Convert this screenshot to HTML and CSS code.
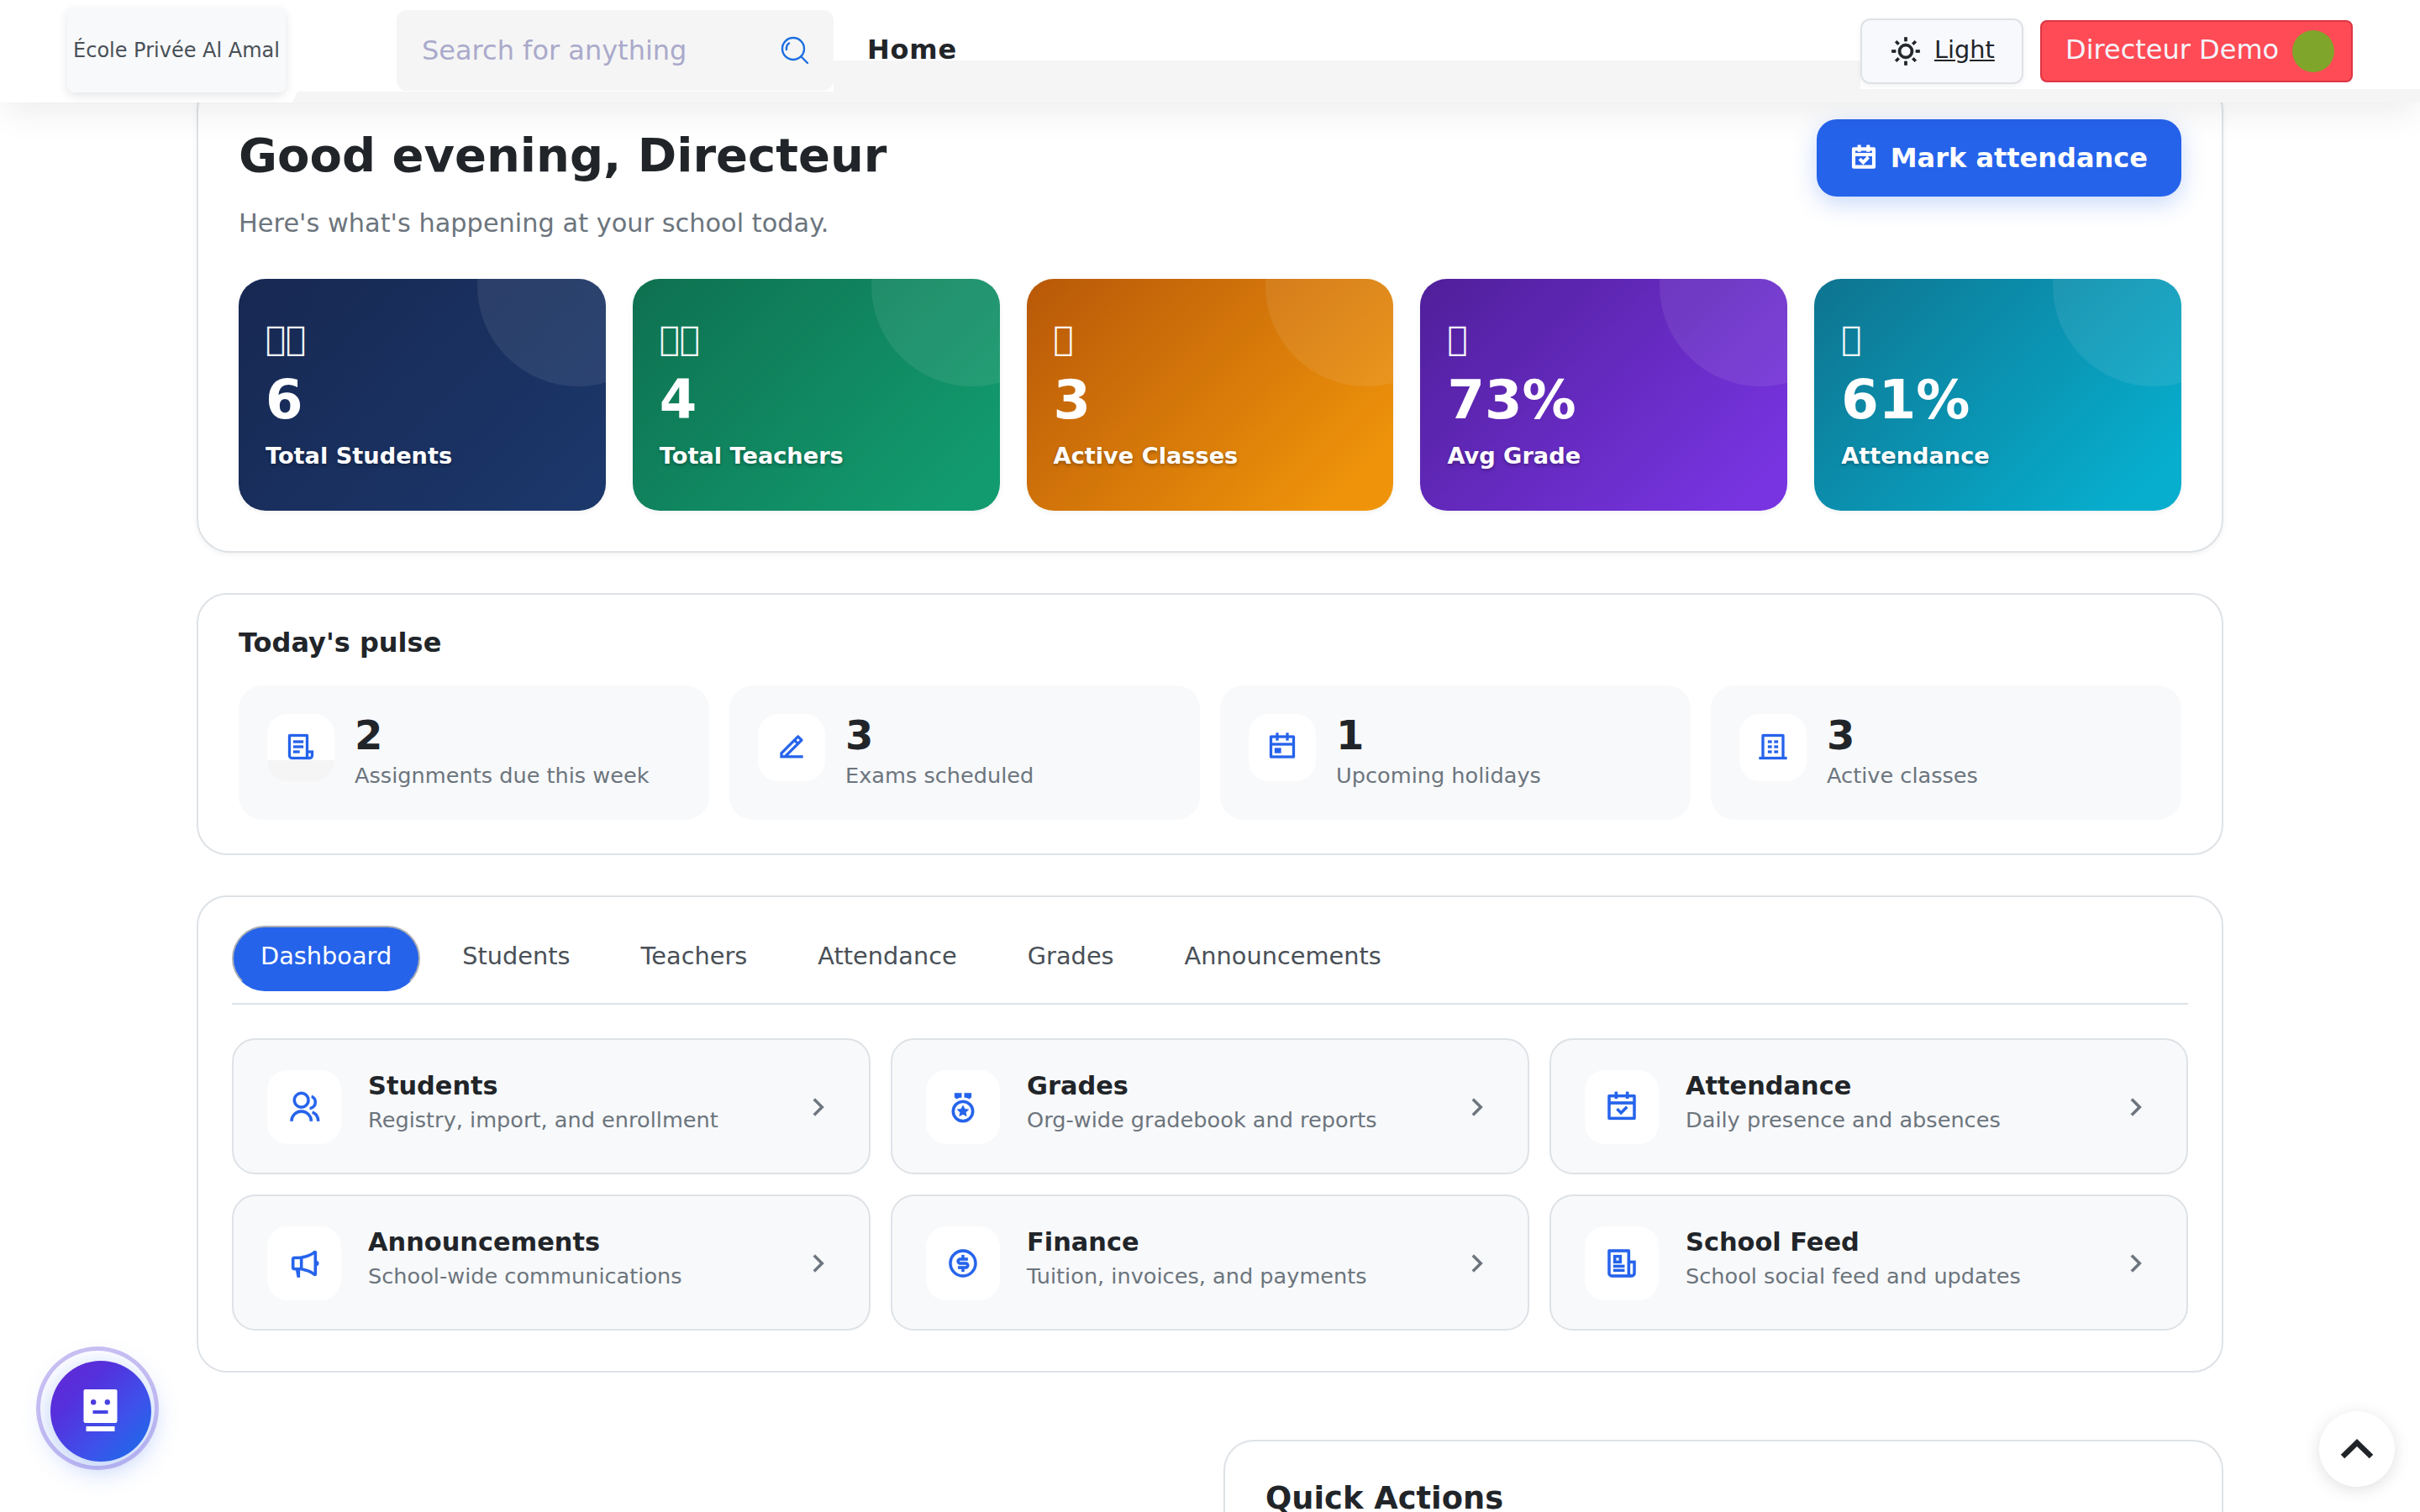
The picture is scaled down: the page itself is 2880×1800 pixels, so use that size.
FILE: index.html
```html
<!DOCTYPE html>
<html lang="en">
<head>
    <meta charset="UTF-8">
    <meta name="viewport" content="width=device-width, initial-scale=1.0">
    <title>École Privée Al Amal - Home</title>
    <link rel="stylesheet" href="styles.css">
</head>
<body>

    <header class="topbar">
        <div class="band band-left"></div>
        <div class="band band-mid"></div>
        <div class="band band-right"></div>
        <a class="logo">École Privée Al Amal</a>
        <div class="search">
            <span>Search for anything</span>
            <svg viewBox="0 0 36 36" fill="none" stroke="currentColor" stroke-width="2.4" stroke-linecap="round"><circle cx="16" cy="16" r="13"/><path d="M25.500 25.500L33 33M8 17a8 8 0 0 1 3-7.500"/></svg>
        </div>
        <a class="nav-home">Home</a>
        <div class="topbar-right">
            <a class="theme-btn">
                <svg class="ri" viewBox="0 0 24 24"><path d="M12 18a6 6 0 1 1 0-12 6 6 0 0 1 0 12zm0-2a4 4 0 1 0 0-8 4 4 0 0 0 0 8zM11 1h2v3h-2V1zm0 19h2v3h-2v-3zM3.515 4.929l1.414-1.414L7.050 5.636 5.636 7.050 3.515 4.930zM16.950 18.364l1.414-1.414 2.121 2.121-1.414 1.414-2.121-2.121zm2.121-14.850l1.414 1.415-2.121 2.121-1.414-1.414 2.121-2.121zM5.636 16.950l1.414 1.414-2.121 2.121-1.414-1.414 2.121-2.121zM23 11v2h-3v-2h3zM4 11v2H1v-2h3z"/></svg>
                <span>Light</span>
            </a>
            <a class="user-btn"><span>Directeur Demo</span> <span class="avatar"></span></a>
        </div>
    </header>

    <main>
        <section class="card hero">
            <div class="hero-head">
                <div>
                    <h1>Good evening, Directeur</h1>
                    <p>Here's what's happening at your school today.</p>
                </div>
                <a class="btn-primary">
                    <svg class="ri" viewBox="0 0 24 24"><path d="M9 1v2h6V1h2v2h4a1 1 0 0 1 1 1v16a1 1 0 0 1-1 1H3a1 1 0 0 1-1-1V4a1 1 0 0 1 1-1h4V1h2zm11 9H4v9h16v-9zm-4.964 1.136l1.414 1.414-4.950 4.950-3.536-3.536L9.380 12.550l2.121 2.122 3.536-3.536zM7 5H4v3h16V5h-3v1h-2V5H9v1H7V5z"/></svg>
                    Mark attendance
                </a>
            </div>
            <div class="stats">
                <div class="stat stat-navy">
                    <div class="stat-icon">&#xF0001;&#xF0002;</div>
                    <div class="stat-value">6</div>
                    <div class="stat-label">Total Students</div>
                </div>
                <div class="stat stat-green">
                    <div class="stat-icon">&#xF0001;&#xF0003;</div>
                    <div class="stat-value">4</div>
                    <div class="stat-label">Total Teachers</div>
                </div>
                <div class="stat stat-orange">
                    <div class="stat-icon">&#xF0003;</div>
                    <div class="stat-value">3</div>
                    <div class="stat-label">Active Classes</div>
                </div>
                <div class="stat stat-purple">
                    <div class="stat-icon">&#xF0004;</div>
                    <div class="stat-value">73%</div>
                    <div class="stat-label">Avg Grade</div>
                </div>
                <div class="stat stat-cyan">
                    <div class="stat-icon">&#xF0005;</div>
                    <div class="stat-value">61%</div>
                    <div class="stat-label">Attendance</div>
                </div>
            </div>
        </section>

        <section class="card pulse">
            <h2>Today's pulse</h2>
            <div class="pulse-grid">
                <div class="pulse-item">
                    <div class="pulse-icon pulse-icon-split"><svg class="ri" viewBox="0 0 24 24"><path d="M19 22H5a3 3 0 0 1-3-3V3a1 1 0 0 1 1-1h14a1 1 0 0 1 1 1v12h4v4a3 3 0 0 1-3 3zm-1-5v2a1 1 0 0 0 2 0v-2h-2zm-2 3V4H4v15a1 1 0 0 0 1 1h11zM6 7h8v2H6V7zm0 4h8v2H6v-2zm0 4h5v2H6v-2z"/></svg></div>
                    <div><strong>2</strong><span>Assignments due this week</span></div>
                </div>
                <div class="pulse-item">
                    <div class="pulse-icon"><svg class="ri" viewBox="0 0 24 24"><path d="M5 18.890h1.414l9.314-9.314-1.414-1.414L5 17.476v1.414zm16 2H3v-4.243L16.435 3.212a1 1 0 0 1 1.414 0l2.829 2.829a1 1 0 0 1 0 1.414L9.243 18.890H21v2zM15.728 6.748l1.414 1.414 1.414-1.414-1.414-1.414-1.414 1.414z"/></svg></div>
                    <div><strong>3</strong><span>Exams scheduled</span></div>
                </div>
                <div class="pulse-item">
                    <div class="pulse-icon"><svg class="ri" viewBox="0 0 24 24"><path d="M9 1v2h6V1h2v2h4a1 1 0 0 1 1 1v16a1 1 0 0 1-1 1H3a1 1 0 0 1-1-1V4a1 1 0 0 1 1-1h4V1h2zm11 10H4v8h16v-8zm-9 2v4H6v-4h5zM7 5H4v4h16V5h-3v2h-2V5H9v2H7V5z"/></svg></div>
                    <div><strong>1</strong><span>Upcoming holidays</span></div>
                </div>
                <div class="pulse-item">
                    <div class="pulse-icon"><svg class="ri" viewBox="0 0 24 24"><path d="M21 20h2v2H1v-2h2V3a1 1 0 0 1 1-1h16a1 1 0 0 1 1 1v17zm-2 0V4H5v16h14zM8 11h3v2H8v-2zm0-4h3v2H8V7zm0 8h3v2H8v-2zm5 0h3v2h-3v-2zm0-4h3v2h-3v-2zm0-4h3v2h-3V7z"/></svg></div>
                    <div><strong>3</strong><span>Active classes</span></div>
                </div>
            </div>
        </section>

        <section class="card hub">
            <nav class="tabs">
                <a class="tab active">Dashboard</a>
                <a class="tab">Students</a>
                <a class="tab">Teachers</a>
                <a class="tab">Attendance</a>
                <a class="tab">Grades</a>
                <a class="tab">Announcements</a>
            </nav>
            <div class="tiles">
                <a class="tile">
                    <div class="tile-icon"><svg class="ri" viewBox="0 0 24 24"><path d="M2 22a8 8 0 1 1 16 0h-2a6 6 0 1 0-12 0H2zm8-9c-3.315 0-6-2.685-6-6s2.685-6 6-6 6 2.685 6 6-2.685 6-6 6zm0-2c2.210 0 4-1.790 4-4s-1.790-4-4-4-4 1.790-4 4 1.790 4 4 4zm8.284 3.703A8.002 8.002 0 0 1 23 22h-2a6.001 6.001 0 0 0-3.537-5.473l.82-1.824zm-.688-11.290A5.500 5.500 0 0 1 21 8.500a5.499 5.499 0 0 1-5 5.478v-2.013a3.500 3.500 0 0 0 1.041-6.609l.555-1.943z"/></svg></div>
                    <div class="tile-text"><strong>Students</strong><span>Registry, import, and enrollment</span></div>
                    <svg class="ri arrow" viewBox="0 0 24 24"><path d="M13.172 12l-4.950-4.950 1.414-1.414L16 12l-6.364 6.364-1.414-1.414z"/></svg>
                </a>
                <a class="tile">
                    <div class="tile-icon"><svg class="ri" viewBox="0 0 24 24"><path d="M12 7a8 8 0 1 1 0 16 8 8 0 0 1 0-16zm0 2a6 6 0 1 0 0 12 6 6 0 0 0 0-12zm0 1.500l1.323 2.680 2.957.43-2.140 2.085.505 2.946L12 17.250l-2.645 1.390.505-2.945-2.140-2.086 2.957-.43L12 10.500zm1-8.501L18 2v3l-1.363 1.138A9.935 9.935 0 0 0 13 5.049L13 2zm-2 0v3.050a9.935 9.935 0 0 0-3.636 1.088L6 5V2l5-.001z"/></svg></div>
                    <div class="tile-text"><strong>Grades</strong><span>Org-wide gradebook and reports</span></div>
                    <svg class="ri arrow" viewBox="0 0 24 24"><path d="M13.172 12l-4.950-4.950 1.414-1.414L16 12l-6.364 6.364-1.414-1.414z"/></svg>
                </a>
                <a class="tile">
                    <div class="tile-icon"><svg class="ri" viewBox="0 0 24 24"><path d="M9 1v2h6V1h2v2h4a1 1 0 0 1 1 1v16a1 1 0 0 1-1 1H3a1 1 0 0 1-1-1V4a1 1 0 0 1 1-1h4V1h2zm11 9H4v9h16v-9zm-4.964 1.136l1.414 1.414-4.950 4.950-3.536-3.536L9.380 12.550l2.121 2.122 3.536-3.536zM7 5H4v3h16V5h-3v1h-2V5H9v1H7V5z"/></svg></div>
                    <div class="tile-text"><strong>Attendance</strong><span>Daily presence and absences</span></div>
                    <svg class="ri arrow" viewBox="0 0 24 24"><path d="M13.172 12l-4.950-4.950 1.414-1.414L16 12l-6.364 6.364-1.414-1.414z"/></svg>
                </a>
                <a class="tile">
                    <div class="tile-icon"><svg class="ri" viewBox="0 0 24 24"><path d="M9 17s7 1 10 4h1a1 1 0 0 0 1-1v-6.063a2 2 0 0 0 0-3.874V4a1 1 0 0 0-1-1h-1C16 6 9 7 9 7H5a2 2 0 0 0-2 2v6a2 2 0 0 0 2 2h1l1 5h2v-5zm2-8.339c.683-.146 1.527-.35 2.440-.617 1.678-.494 3.810-1.271 5.560-2.470v12.851c-1.750-1.198-3.883-1.975-5.560-2.469A33.400 33.400 0 0 0 11 15.339V8.661zM5 9h4v6H5V9z"/></svg></div>
                    <div class="tile-text"><strong>Announcements</strong><span>School-wide communications</span></div>
                    <svg class="ri arrow" viewBox="0 0 24 24"><path d="M13.172 12l-4.950-4.950 1.414-1.414L16 12l-6.364 6.364-1.414-1.414z"/></svg>
                </a>
                <a class="tile">
                    <div class="tile-icon"><svg class="ri" viewBox="0 0 24 24"><path d="M12 22C6.477 22 2 17.523 2 12S6.477 2 12 2s10 4.477 10 10-4.477 10-10 10zm0-2a8 8 0 1 0 0-16 8 8 0 0 0 0 16zm-3.500-6H14a.5.5 0 1 0 0-1h-4a2.500 2.500 0 1 1 0-5h1V6h2v2h2.500v2H10a.5.5 0 1 0 0 1h4a2.500 2.500 0 1 1 0 5h-1v2h-2v-2H8.500v-2z"/></svg></div>
                    <div class="tile-text"><strong>Finance</strong><span>Tuition, invoices, and payments</span></div>
                    <svg class="ri arrow" viewBox="0 0 24 24"><path d="M13.172 12l-4.950-4.950 1.414-1.414L16 12l-6.364 6.364-1.414-1.414z"/></svg>
                </a>
                <a class="tile">
                    <div class="tile-icon"><svg class="ri" viewBox="0 0 24 24"><path d="M16 20V4H4v15a1 1 0 0 0 1 1h11zm3 2H5a3 3 0 0 1-3-3V3a1 1 0 0 1 1-1h14a1 1 0 0 1 1 1v7h4v9a3 3 0 0 1-3 3zm-1-10v7a1 1 0 0 0 2 0v-7h-2zM6 6h6v6H6V6zm2 2v2h2V8H8zm-2 5h8v2H6v-2zm0 3h8v2H6v-2z"/></svg></div>
                    <div class="tile-text"><strong>School Feed</strong><span>School social feed and updates</span></div>
                    <svg class="ri arrow" viewBox="0 0 24 24"><path d="M13.172 12l-4.950-4.950 1.414-1.414L16 12l-6.364 6.364-1.414-1.414z"/></svg>
                </a>
            </div>
        </section>

        <section class="card quick">
            <h2>Quick Actions</h2>
        </section>
    </main>

    <a class="assistant">
        <svg viewBox="0 0 42 52"><path fill="#fff" fill-rule="evenodd" d="M2.500 0h36a2 2 0 0 1 2 2v36a2 2 0 0 1-2 2h-36a2 2 0 0 1-2-2V2a2 2 0 0 1 2-2zM12.200 12a3.200 3.200 0 1 0 0 6.400 3.200 3.200 0 0 0 0-6.400zM28.800 12a3.200 3.200 0 1 0 0 6.400 3.200 3.200 0 0 0 0-6.400zM11.500 25v4h18v-4zM3.500 44h34v6h-34z"/></svg>
    </a>
    <a class="to-top">
        <svg viewBox="0 0 40 26" fill="none" stroke="#212529" stroke-width="6.500"><path d="M3 22L20 5.500l17 16.500"/></svg>
    </a>

</body>
</html>
```
FILE: styles.css
```css
*, *::before, *::after {
    box-sizing: border-box;
}
body, html {
    margin: 0;
    padding: 0;
    height: 1800px;
    overflow: hidden;
}
body {
    font-family: "DejaVu Sans", sans-serif;
    background-color: #ffffff;
    color: #212529;
}
h1, h2, p {
    margin: 0;
}
.ri {
    fill: currentColor;
    display: block;
    flex: none;
}

/* top bar */
.topbar {
    position: relative;
    z-index: 10;
    display: flex;
    align-items: flex-start;
    height: 122px;
    padding: 0 80px;
    background: #ffffff;
    box-shadow: 0 16px 40px -4px rgba(0, 0, 0, 0.075);
}
.band {
    position: absolute;
    bottom: 0;
    background: #f5f5f5;
}
.band-left {
    left: 348px;
    width: 644px;
    height: 13px;
    clip-path: polygon(6px 0, 100% 0, 100% 100%, 0 100%);
}
.band-mid {
    left: 992px;
    width: 1222px;
    height: 50px;
}
.band-right {
    left: 2214px;
    right: 0;
    height: 16px;
}
.logo {
    position: relative;
    width: 260px;
    height: 101px;
    margin-top: 9px;
    border-radius: 8px;
    background: #f8f9fb;
    box-shadow: 0 4px 12px rgba(0, 0, 0, 0.1);
    color: #495057;
    font-size: 24px;
    line-height: 103px;
    text-align: center;
    white-space: nowrap;
}
.search {
    position: relative;
    display: flex;
    align-items: center;
    justify-content: space-between;
    width: 520px;
    height: 96px;
    margin: 12px 0 0 132px;
    padding: 0 28px 0 30px;
    border-radius: 12px;
    background: #f5f5f5;
    color: #aaaacb;
    font-size: 32px;
}
.search svg {
    width: 36px;
    height: 36px;
    color: #1d6fe0;
}
.nav-home {
    position: relative;
    margin: 40px 0 0 40px;
    font-size: 32px;
    font-weight: 700;
    letter-spacing: 0.8px;
    line-height: 38px;
}
.topbar-right {
    position: relative;
    display: flex;
    align-items: center;
    gap: 20px;
    height: 122px;
    margin-left: auto;
}
.theme-btn {
    display: flex;
    align-items: center;
    gap: 16px;
    width: 194px;
    height: 78px;
    padding: 0 0 0 34px;
    border: 2px solid #dee2e6;
    border-radius: 12px;
    background: #f8f9fc;
    box-shadow: 0 2px 6px rgba(0, 0, 0, 0.06);
    font-size: 28.8px;
    text-decoration: underline;
}
.theme-btn .ri {
    width: 36px;
    height: 36px;
    stroke: currentColor;
    stroke-width: 0.5;
}
.theme-btn span, .user-btn span:first-child {
    padding-bottom: 4px;
}
.user-btn {
    display: flex;
    align-items: center;
    justify-content: space-between;
    width: 372px;
    height: 74px;
    padding: 0 20px 0 28px;
    border: 2px solid #dc3545;
    border-radius: 8px;
    background: #ff4b55;
    color: #f4f4fb;
    font-size: 32px;
}
.avatar {
    width: 50px;
    height: 50px;
    border-radius: 50%;
    background: #7fa52a;
}

/* cards */
main {
    padding: 0 234px;
}
.card {
    border: 2px solid #dee2e6;
    border-radius: 40px;
    background: #ffffff;
}
.card h2 {
    font-weight: 700;
}
.hero {
    height: 566px;
    margin-top: -30px;
    padding: 48px;
    box-shadow: 0 2px 6px rgba(0, 0, 0, 0.06);
}
.hero-head {
    display: flex;
    justify-content: space-between;
    align-items: flex-start;
    height: 190px;
}
.hero h1 {
    padding-top: 9px;
    font-size: 56px;
    line-height: 67px;
}
.hero p {
    margin-top: 28px;
    color: #6c757d;
    font-size: 30.4px;
    line-height: 40px;
}
.btn-primary {
    display: flex;
    align-items: center;
    gap: 16px;
    height: 92px;
    padding: 0 40px 1px;
    border-radius: 24px;
    background: #2563eb;
    box-shadow: 0 8px 28px rgba(37, 99, 235, 0.25);
    color: #ffffff;
    font-size: 32px;
    font-weight: 700;
}
.btn-primary .ri {
    width: 32px;
    height: 32px;
    stroke: #ffffff;
    stroke-width: 1.1;
}
.stats {
    display: grid;
    grid-template-columns: repeat(5, 1fr);
    gap: 32px;
}
.stat {
    position: relative;
    overflow: hidden;
    height: 276px;
    padding: 43px 32px 0;
    border-radius: 32px;
    box-shadow: 0 2px 6px rgba(0, 0, 0, 0.06);
    color: #ffffff;
}
.stat::after {
    content: "";
    position: absolute;
    top: -112px;
    right: -20%;
    width: 240px;
    height: 240px;
    border-radius: 50%;
    background: rgba(255, 255, 255, 0.08);
}
.stat-navy { background: linear-gradient(135deg, #172852, #1c386c); }
.stat-green { background: linear-gradient(135deg, #0e7050, #129b6e 90%); }
.stat-orange { background: linear-gradient(135deg, #b85809, #ef940a 90%); }
.stat-purple { background: linear-gradient(135deg, #501f9a, #7734e0 90%); }
.stat-cyan { background: linear-gradient(135deg, #0e7490, #07aece 90%); }
.stat-icon {
    font-size: 40px;
    line-height: 56px;
    opacity: 0.95;
}
.stat-value {
    margin-top: 9px;
    font-size: 64px;
    font-weight: 700;
    line-height: 72px;
}
.stat-label {
    margin-top: 13px;
    font-size: 27.2px;
    font-weight: 700;
    line-height: 36px;
    text-shadow: 0 2px 4px rgba(0, 0, 0, 0.3);
}

/* today's pulse */
.pulse {
    height: 312px;
    margin-top: 48px;
    padding: 36px 48px;
    border-radius: 36px;
}
.pulse h2 {
    height: 72px;
    font-size: 32px;
    line-height: 42px;
}
.pulse-grid {
    display: grid;
    grid-template-columns: repeat(4, 1fr);
    gap: 24px;
}
.pulse-item {
    display: flex;
    gap: 24px;
    height: 160px;
    padding: 34px;
    border-radius: 28px;
    background: #f8f9fb;
}
.pulse-icon {
    display: flex;
    align-items: center;
    justify-content: center;
    width: 80px;
    height: 80px;
    padding-bottom: 2px;
    border-radius: 24px;
    background: #ffffff;
    color: #2563eb;
}
.pulse-icon-split {
    background: linear-gradient(#ffffff 55px, #f5f5f5 55px);
}
.pulse-icon .ri {
    width: 36px;
    height: 36px;
    stroke: currentColor;
    stroke-width: 0.2;
}
.pulse-item strong {
    display: block;
    height: 50px;
    font-size: 48px;
    line-height: 50px;
}
.pulse-item span {
    display: block;
    color: #6c757d;
    font-size: 25.6px;
    line-height: 46px;
}

/* hub tabs and tiles */
.hub {
    height: 568px;
    margin-top: 48px;
    padding: 34px 40px;
    border-radius: 36px;
}
.tabs {
    display: flex;
    gap: 16px;
    height: 94px;
    border-bottom: 2px solid #dee2e6;
}
.tab {
    height: 78px;
    padding: 0 32px;
    border: 2px solid transparent;
    border-radius: 40px;
    color: #495057;
    font-size: 28.8px;
    line-height: 68px;
}
.tab.active {
    border-color: #a9adb3 #a9adb3 transparent;
    background: #2563eb;
    color: #ffffff;
}
.tiles {
    display: grid;
    grid-template-columns: repeat(3, 1fr);
    gap: 24px;
    margin-top: 40px;
}
.tile {
    display: flex;
    align-items: center;
    height: 162px;
    padding: 1px 40px 0;
    border: 2px solid #dee2e6;
    border-radius: 28px;
    background: #f8f9fb;
}
.tile-icon {
    display: flex;
    align-items: center;
    justify-content: center;
    width: 88px;
    height: 88px;
    border-radius: 24px;
    background: #ffffff;
    color: #2563eb;
}
.tile .ri {
    width: 40px;
    height: 40px;
    stroke: currentColor;
    stroke-width: 0.15;
}
.tile-text {
    flex: 1;
    margin-left: 32px;
}
.tile-text strong {
    display: block;
    font-size: 30.4px;
    line-height: 40px;
}
.tile-text span {
    display: block;
    margin-bottom: 8px;
    color: #6c757d;
    font-size: 25.6px;
    line-height: 41px;
}
.arrow {
    color: #6c757d;
}

/* quick actions */
.quick {
    width: 1190px;
    height: 86px;
    margin: 80px 0 0 auto;
    padding: 44px 48px 0;
    border-bottom: 0;
    border-radius: 36px 36px 0 0;
}
.quick h2 {
    font-size: 36.8px;
    line-height: 47px;
}

/* floating buttons */
.assistant {
    position: absolute;
    z-index: 20;
    left: 60px;
    top: 1620px;
    display: flex;
    align-items: center;
    justify-content: center;
    width: 120px;
    height: 120px;
    border-radius: 50%;
    background: linear-gradient(135deg, #6428d4, #5530dc 30%, #3d52ea 65%, #1470e8);
    box-shadow: 0 8px 32px rgba(37, 99, 235, 0.35);
}
.assistant::before {
    content: "";
    position: absolute;
    left: -17px;
    top: -17px;
    width: 146px;
    height: 147px;
    border: 5px solid rgba(109, 80, 220, 0.36);
    border-radius: 50%;
}
.assistant svg {
    width: 42px;
    height: 52px;
}
.to-top {
    position: absolute;
    z-index: 20;
    right: 30px;
    top: 1680px;
    display: flex;
    align-items: center;
    justify-content: center;
    width: 90px;
    height: 90px;
    border-radius: 50%;
    background: #ffffff;
    box-shadow: 0 4px 20px rgba(0, 0, 0, 0.12);
}
.to-top svg {
    width: 40px;
    height: 26px;
}
```
